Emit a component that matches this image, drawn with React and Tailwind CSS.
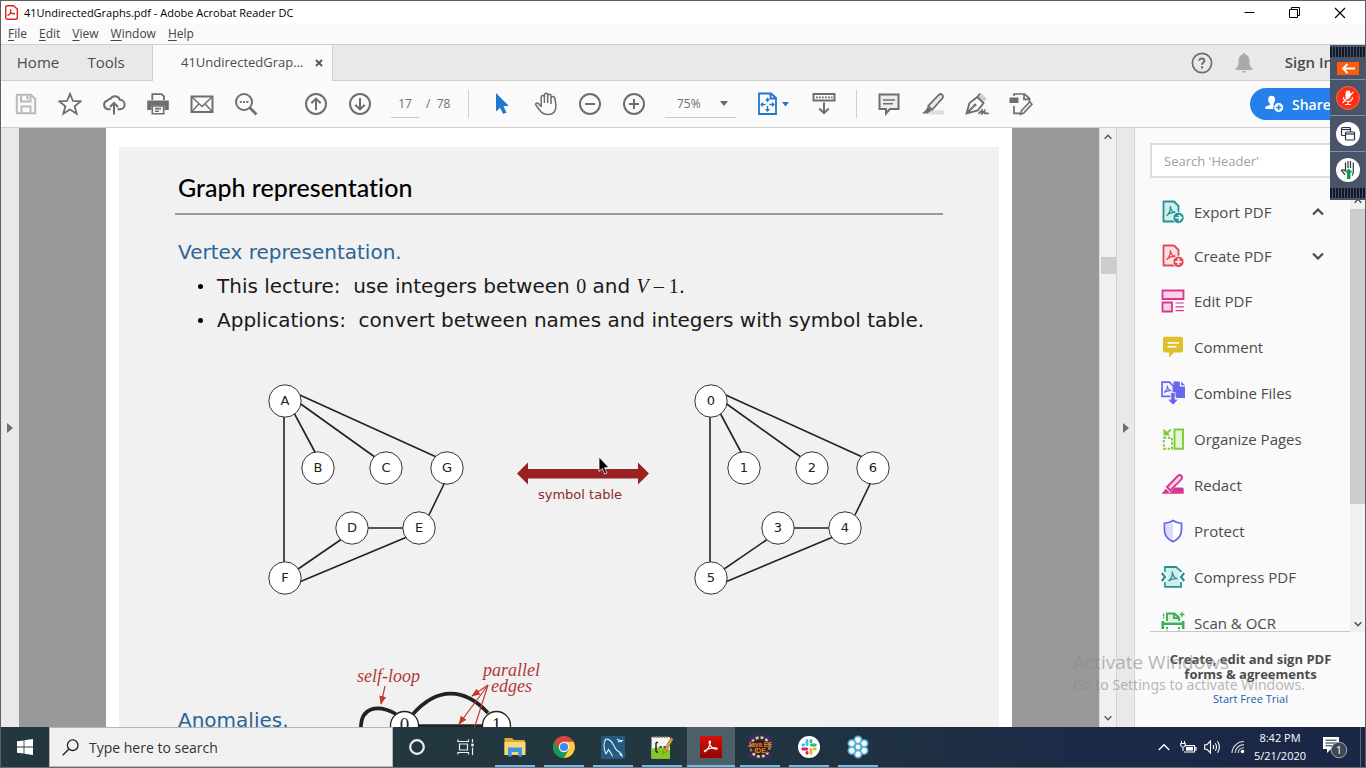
import React from "react";

const SANS = "font-['Open_Sans','Noto_Sans',sans-serif]";
const SLIDE = "font-['DejaVu_Sans',sans-serif]";

function Icon({ size = 24, children, className = "" }) {
  return (
    <svg width={size} height={size} viewBox="0 0 24 24" fill="none" stroke="currentColor" strokeWidth="2" className={`shrink-0 ${className}`} aria-hidden="true">
      {children}
    </svg>
  );
}

function ToolButton({ label, children, className = "" }) {
  return (
    <button type="button" aria-label={label} className={`flex h-11 w-11 shrink-0 items-center justify-center text-[#6e6e6e] ${className}`}>
      {children}
    </button>
  );
}

function Chevron({ up = false, className = "" }) {
  return (
    <svg width="12" height="8" viewBox="0 0 12 8" fill="none" stroke="currentColor" strokeWidth="2.2" className={className} aria-hidden="true">
      <path d={up ? "M1 6.5 L6 1.5 L11 6.5" : "M1 1.5 L6 6.5 L11 1.5"} />
    </svg>
  );
}

const ACROBAT_PATH = "M5.5 17 C8 15.5 11 10.5 11.3 6.5 C11.3 5 9.8 5 10 7 C10.3 10.5 13.5 14 17.5 14.3 C19.3 14.3 19 12.8 17 12.8 C13 12.6 8.5 14 5.8 15.6 C4.3 16.6 4.6 17.6 5.5 17 Z";

function TitleBar() {
  return (
    <header className="flex h-[23px] shrink-0 items-center bg-white pl-1">
      <svg width="13" height="15" viewBox="0 0 13 15" className="mr-[6px]" aria-hidden="true">
        <path d="M2.5 .7 H8.5 L12.3 4 V12.5 Q12.3 14.3 10.5 14.3 H2.5 Q.7 14.3 .7 12.5 V2.5 Q.7 .7 2.5 .7 Z" fill="#fff" stroke="#e0201b" strokeWidth="1.4" />
        <g transform="translate(0.6 2.2) scale(0.48)"><path d={ACROBAT_PATH} fill="none" stroke="#e0201b" strokeWidth="2.2" /></g>
      </svg>
      <h1 className="text-[11px] leading-4 text-black">41UndirectedGraphs.pdf - Adobe Acrobat Reader DC</h1>
      <div className="ml-auto flex pr-[2px] text-black">
        <button type="button" aria-label="Minimize" className="flex h-[22px] w-[45px] items-center justify-center">
          <svg width="11" height="11" viewBox="0 0 11 11"><path d="M.5 5.5 H10.5" stroke="currentColor" /></svg>
        </button>
        <button type="button" aria-label="Restore" className="flex h-[22px] w-[45px] items-center justify-center">
          <svg width="11" height="11" viewBox="0 0 11 11" fill="none" stroke="currentColor"><path d="M.5 2.5 H8.5 V10.5 H.5 Z M2.5 2 V.5 H10.5 V8.5 H9" /></svg>
        </button>
        <button type="button" aria-label="Close" className="flex h-[22px] w-[46px] items-center justify-center">
          <svg width="12" height="12" viewBox="0 0 12 12"><path d="M1 1 L11 11 M11 1 L1 11" stroke="currentColor" strokeWidth="1.1" /></svg>
        </button>
      </div>
    </header>
  );
}

function MenuBar() {
  return (
    <nav className="flex h-5 shrink-0 gap-3 bg-[#fafafa] pl-[7px] text-[12px] leading-5 text-[#444]">
      {["File", "Edit", "View", "Window", "Help"].map((m) => (
        <button type="button" key={m}>
          <span className="underline underline-offset-2">{m[0]}</span>{m.slice(1)}
        </button>
      ))}
    </nav>
  );
}

function TabBar() {
  return (
    <div className="flex h-[37px] shrink-0 items-stretch border-y border-[#cfcfcf] bg-[#e9e9e9] text-[15px] text-[#4b4b4b]">
      <button type="button" className="w-[74px]">Home</button>
      <button type="button" className="w-[62px]">Tools</button>
      <div className="-mb-px ml-[15px] flex w-[181px] items-center border-x border-[#d0d0d0] bg-[#fafafa] pl-7">
        <span className="text-[13px]">41UndirectedGrap...</span>
        <button type="button" aria-label="Close tab" className="ml-3">
          <svg width="8" height="8" viewBox="0 0 8 8"><path d="M1 1 L7 7 M7 1 L1 7" stroke="#555" strokeWidth="1.8" /></svg>
        </button>
      </div>
      <div className="ml-auto flex items-center pr-8">
        <button type="button" aria-label="Help" className="flex w-[42px] justify-center text-[#6e6e6e]">
          <svg width="22" height="22" viewBox="0 0 22 22" fill="none" stroke="currentColor">
            <circle cx="11" cy="11" r="9.6" strokeWidth="1.7" />
            <path d="M8.3 8.8 C8.3 5.6 13.6 5.8 13.4 8.7 C13.3 10.4 11 10.6 11 12.7" strokeWidth="2" />
            <path d="M11 14.3 V16.5" strokeWidth="2.2" />
          </svg>
        </button>
        <button type="button" aria-label="Notifications" className="flex w-[42px] justify-center">
          <svg width="18" height="20" viewBox="0 0 18 20" fill="#a9a9a9"><path d="M9 0 Q10.3 0 10.3 1.6 Q14.4 2.8 14.4 7.5 C14.4 12.5 15.2 14 17.3 15.2 V17 H.7 V15.2 C2.8 14 3.6 12.5 3.6 7.5 Q3.6 2.8 7.7 1.6 Q7.7 0 9 0 Z M7 18 H11 Q10.8 19.8 9 19.8 Q7.2 19.8 7 18 Z" /></svg>
        </button>
        <button type="button" className="ml-5 font-semibold">Sign In</button>
      </div>
    </div>
  );
}

function Toolbar() {
  return (
    <div className="flex h-[47px] shrink-0 items-center border-b border-[#cfcfcf] bg-[#fafafa] pl-[3px] text-[12px] text-[#6e6e6e]">
      <ToolButton label="Save">
        <Icon className="text-[#b9b9b9]"><path d="M2.8 2.8 H17 L21.2 7 V21.2 H2.8 Z" /><path d="M7 3 V9.5 H16.5 V3 M7.5 21 V14.5 H16.5 V21 M13.5 4 V7.5" /></Icon>
      </ToolButton>
      <ToolButton label="Bookmark">
        <Icon><path d="M12 1.8 L14.9 9 L22.6 9.4 L16.6 14.3 L18.7 21.8 L12 17.5 L5.3 21.8 L7.4 14.3 L1.4 9.4 L9.1 9 Z" strokeWidth="1.8" /></Icon>
      </ToolButton>
      <ToolButton label="Upload to cloud">
        <Icon><path d="M8.5 17.2 H6 A4.3 4.3 0 0 1 5.2 8.8 A4 4 0 0 1 8.6 6.8 A5 5 0 0 1 17.8 7.8 A4.7 4.7 0 0 1 18 17.2 H15.5 M12 22.5 V11.5 M8 15 L12 11 L16 15" /></Icon>
      </ToolButton>
      <ToolButton label="Print">
        <Icon><path d="M6.3 8 V2.2 H15.5 L18 4.5 V8" strokeWidth="1.8" /><path d="M1.2 8.5 H22.8 V18 H18.5 V13.5 H5.5 V18 H1.2 Z" fill="currentColor" stroke="none" /><path d="M6.3 14 H17.7 V21.8 H6.3 Z M9 16.6 H15 M9 19.2 H13" strokeWidth="1.6" /></Icon>
      </ToolButton>
      <ToolButton label="E-mail">
        <Icon><path d="M1.5 4.5 H22.5 V20 H1.5 Z" /><path d="M2 5 L12 14.5 L22 5 M2 19.5 L9 11.8 M22 19.5 L15 11.8" strokeWidth="1.4" /></Icon>
      </ToolButton>
      <ToolButton label="Find">
        <Icon><circle cx="10" cy="10" r="8" /><path d="M15.8 15.8 L22.5 22.5" strokeWidth="2.8" /><path d="M5.8 10 H14.5" strokeDasharray="2 1.3" /></Icon>
      </ToolButton>
      <ToolButton label="Previous page" className="ml-[26px]">
        <Icon><circle cx="12" cy="12" r="10" /><path d="M12 18 V7 M7.3 11.3 L12 6.6 L16.7 11.3" /></Icon>
      </ToolButton>
      <ToolButton label="Next page">
        <Icon><circle cx="12" cy="12" r="10" /><path d="M12 6 V17 M7.3 12.7 L12 17.4 L16.7 12.7" /></Icon>
      </ToolButton>
      <input aria-label="Page number" defaultValue="17" className="ml-[9px] h-[27px] w-7 shrink-0 border-b border-[#c8c8c8] bg-transparent text-center outline-none" />
      <span className="ml-[7px] w-[42px] shrink-0 whitespace-pre">/  78</span>
      <div className="h-7 w-px shrink-0 bg-[#d0d0d0]" />
      <ToolButton label="Select" className="ml-[11px]">
        <Icon><path d="M6 1 V19.5 L10 15.8 L13.2 22 L16.5 20.4 L13.4 14.3 L18.7 13.8 Z" fill="#2176cf" stroke="none" /></Icon>
      </ToolButton>
      <ToolButton label="Pan">
        <Icon><path d="M7.2 15 V5.2 a1.6 1.6 0 0 1 3.2 0 V11 V3 a1.6 1.6 0 0 1 3.3 0 V11 V3.8 a1.6 1.6 0 0 1 3.3 0 V12 V6.5 a1.6 1.6 0 0 1 3.8 0 L22 13 C22 19.5 19.5 22.6 14 22.6 C9 22.6 7 20.5 4.8 17 L1.8 12.8 C1 11.3 3.2 10.2 4.8 11.8 L7.2 14.8" strokeWidth="1.5" /></Icon>
      </ToolButton>
      <ToolButton label="Zoom out">
        <Icon><circle cx="12" cy="12" r="10" /><path d="M7 12 H17" /></Icon>
      </ToolButton>
      <ToolButton label="Zoom in">
        <Icon><circle cx="12" cy="12" r="10" /><path d="M7 12 H17 M12 7 V17" /></Icon>
      </ToolButton>
      <div className="ml-[9px] flex h-[27px] w-[71px] shrink-0 items-center border-b border-[#c8c8c8]">
        <select aria-label="Zoom level" defaultValue="75%" className="w-full appearance-none bg-transparent pl-3 outline-none">
          <option>75%</option>
        </select>
        <svg width="8" height="5" viewBox="0 0 8 5" className="mr-2 shrink-0" aria-hidden="true"><path d="M0 0 H8 L4 5 Z" fill="#666" /></svg>
      </div>
      <button type="button" aria-label="Fit page" className="ml-[21px] flex shrink-0 items-center gap-1">
        <svg width="21" height="24" viewBox="0 0 21 24" fill="none" stroke="#2176cf" strokeWidth="1.8">
          <path d="M2 1.5 H14 L19 6 V22 H2 Z M13.5 2 V6.5 H18.5" />
          <path d="M10.5 7 V10 M10.5 14 V19 M4.5 12.5 H8.5 M12.5 12.5 H16.5" strokeWidth="1.4" />
          <path d="M10.5 5.5 L13 8.5 H8 Z M10.5 20 L13 17 H8 Z M3.2 12.5 L6 10 V15 Z M17.8 12.5 L15 10 V15 Z" fill="#2176cf" stroke="none" />
        </svg>
        <svg width="7" height="5" viewBox="0 0 7 5"><path d="M0 0 H7 L3.5 4.5 Z" fill="#2176cf" /></svg>
      </button>
      <ToolButton label="Scroll mode" className="ml-[13px]">
        <Icon><path d="M1.5 2 H22.5 V8.5 H1.5 Z" /><path d="M4 5.3 H20.5" strokeDasharray="1.8 1.2" strokeWidth="1.8" /><path d="M12 10.5 V21 M7.3 16.5 L12 21.2 L16.7 16.5" /></Icon>
      </ToolButton>
      <div className="ml-[10px] h-7 w-px shrink-0 bg-[#d0d0d0]" />
      <ToolButton label="Add comment" className="ml-[10px]">
        <Icon><path d="M2.5 2.5 H21.5 V17 H13 L9 21.5 V17 H2.5 Z" fill="#ededed" /><path d="M6 8 H18 M6 11.8 H16" strokeWidth="1.4" /></Icon>
      </ToolButton>
      <ToolButton label="Highlight">
        <Icon><path d="M9 18.5 H23 V22.5 H5 Z" fill="#dcdcdc" stroke="none" /><path d="M7.2 13.8 L17.8 2.8 Q19.5 1.2 21.3 2.8 Q22.8 4.6 21.3 6.4 L11.2 17.8 Z" fill="#e8e8e8" strokeWidth="1.7" /><path d="M6.8 14.5 L10.8 18.3 L6.5 21.5 H1 L4.8 18 Z" fill="currentColor" stroke="none" /></Icon>
      </ToolButton>
      <ToolButton label="Sign">
        <Icon><path d="M12.5 5 L16 1 L21.8 6.5 L18.3 10.5 Z" fill="#cfcfcf" stroke="none" /><path d="M1.5 21.5 L4.5 11 L12.3 5 L18.5 11 L12.8 18.5 Z M2 21 L9 14" strokeWidth="1.9" /><path d="M12.3 5 L15 1.5" strokeWidth="1.6" /><circle cx="10" cy="13" r="1.6" fill="currentColor" stroke="none" /><path d="M13.5 21.8 L17 18.3 V21.5 L19.6 18.6 V21.3 H23.8" strokeWidth="1.7" /></Icon>
      </ToolButton>
      <ToolButton label="More tools">
        <Icon><path d="M5 4 V2 H15.5 L20.5 6.5 V10 M5 14 V21.3 H11 M15 2.5 V7.3 H20" strokeWidth="1.7" /><path d="M0.5 5.5 H9.5 V11 H0.5 Z" fill="currentColor" stroke="none" /><path d="M12.5 18.5 L20.8 9.8 L23 12.2 L14.8 21 L11.5 22.2 Z" fill="#e8e8e8" strokeWidth="1.5" /></Icon>
      </ToolButton>
      <button type="button" className="ml-auto mr-[11px] flex h-8 w-[104px] shrink-0 items-center gap-[8px] rounded-full bg-[#2680eb] pl-[15px] text-[14px] font-semibold text-white">
        <svg width="19" height="18" viewBox="0 0 19 18" aria-hidden="true">
          <path d="M6.5 .8 Q10 .8 10 4.5 Q10 7 8.5 8.8 V10 L11 11.2 L9.5 14 H.3 V12.5 Q.3 11 5 10 V8.8 Q3.2 7.5 3.2 4.5 Q3.2 .8 6.5 .8 Z" fill="#fff" />
          <circle cx="13.7" cy="12.5" r="5" fill="#fff" stroke="#2680eb" />
          <path d="M11 12.5 H16.4 M13.7 9.8 V15.2" stroke="#2680eb" strokeWidth="1.5" />
        </svg>
        Share
      </button>
    </div>
  );
}

const NODES = [[18, 18], [51, 85], [119, 85], [180, 85], [85, 145], [152, 145], [18, 195]];
const EDGES = [[17, 18, 17, 195], [26, 28, 49, 71], [24, 14, 119, 82], [24, 8, 176, 77], [178, 99, 162, 132], [85, 145, 152, 145], [18, 195, 85, 149], [18, 205, 152, 149]];

function Graph({ labels }) {
  return (
    <svg width="200" height="214" viewBox="0 0 200 214" className={`shrink-0 ${SLIDE}`}>
      {EDGES.map(([a, b, c, d], i) => <line key={i} x1={a} y1={b} x2={c} y2={d} stroke="#222" strokeWidth="1.6" />)}
      {NODES.map(([x, y], i) => (
        <g key={labels[i]}>
          <circle cx={x} cy={y} r="16.2" fill="#fff" stroke="#333" strokeWidth="1" />
          <text x={x} y={y + 4} textAnchor="middle" fontSize="13" fill="#222">{labels[i]}</text>
        </g>
      ))}
    </svg>
  );
}

function Anomaly() {
  return (
    <svg width="200" height="84" viewBox="350 656 200 84" className="shrink-0" fontFamily="'Liberation Serif', serif">
      <defs>
        <marker id="tip" viewBox="0 0 10 8" refX="9" refY="4" markerWidth="9" markerHeight="7" markerUnits="userSpaceOnUse" orient="auto"><path d="M0 0 L10 4 L0 8 Z" fill="#c0392b" /></marker>
      </defs>
      <g fill="none" stroke="#222" strokeWidth="3.6">
        <path d="M361 732 C359 706 378 704 396 714" />
        <path d="M413 714 C437 687 464 687 488 713" />
        <path d="M418 726 H483" />
      </g>
      <circle cx="404.5" cy="725.5" r="14" fill="#fff" stroke="#222" strokeWidth="1.3" />
      <circle cx="496.5" cy="725.5" r="14" fill="#fff" stroke="#222" strokeWidth="1.3" />
      <text x="404.5" y="731" fontSize="19" textAnchor="middle" fill="#222">0</text>
      <text x="496.5" y="731" fontSize="19" textAnchor="middle" fill="#222">1</text>
      <g stroke="#c0392b" strokeWidth="1.2">
        <line x1="385" y1="686" x2="381" y2="704" markerEnd="url(#tip)" />
        <line x1="488" y1="685" x2="472" y2="696" markerEnd="url(#tip)" />
        <line x1="488" y1="685" x2="459" y2="724" markerEnd="url(#tip)" />
        <line x1="488" y1="685" x2="473" y2="732" />
      </g>
      <g fontStyle="italic" fontSize="18" fill="#b03a35">
        <text x="357" y="682">self-loop</text>
        <text x="483" y="676">parallel</text>
        <text x="491" y="692">edges</text>
      </g>
    </svg>
  );
}

function Document() {
  return (
    <main className="flex min-w-0 flex-1 justify-center overflow-hidden bg-[#999]">
      <div className="h-max w-[906px] shrink-0 bg-white px-[13px] pt-[19px]">
        <article className={`bg-[#f1f1f1] px-[56px] pt-6 text-[20px] leading-[34px] text-[#1a1a1a] ${SLIDE}`}>
          <h2 className="pl-[3px] font-['Lato',sans-serif] text-[25px] font-medium leading-8 text-black [font-variant-ligatures:none]">Graph representation</h2>
          <hr className="mt-[10px] border-t-2 border-[#9b9b9b]" />
          <h3 className="mt-5 pl-[3px] text-[#2a6496]">Vertex representation.</h3>
          <ul className="whitespace-pre pl-[23px]">
            <li className="flex items-center gap-[14px]">
              <span className="h-[5px] w-[5px] rounded-full bg-black" />
              <span>This lecture:  use integers between <span className="font-['Liberation_Serif',serif]">0</span> and <span className="font-['Liberation_Serif',serif]"><i>V</i> – 1</span>.</span>
            </li>
            <li className="flex items-center gap-[14px]">
              <span className="h-[5px] w-[5px] rounded-full bg-black" />
              <span>Applications:  convert between names and integers with symbol table.</span>
            </li>
          </ul>
          <div className="mt-[46px] flex gap-11 pl-[92px]">
            <Graph labels={["A", "B", "C", "G", "D", "E", "F"]} />
            <figure className="w-[138px] shrink-0 pt-[79px]">
              <svg width="138" height="23" viewBox="0 0 138 23"><path d="M6 11.5 L17 .5 V7 H127 V.5 L138 11.5 L127 22.5 V16.5 H17 V22.5 Z" fill="#992222" /></svg>
              <figcaption className="text-center text-[13px] leading-5 text-[#8e2a2a]">symbol table</figcaption>
            </figure>
            <Graph labels={["0", "1", "2", "6", "3", "4", "5"]} />
          </div>
          <div className="mt-[59px] flex pl-[3px]">
            <h3 className="mt-[47px] w-[172px] text-[#2a6496]">Anomalies.</h3>
            <Anomaly />
          </div>
        </article>
      </div>
    </main>
  );
}

function PaneHandle({ label, className = "" }) {
  return (
    <button type="button" aria-label={label} className={`flex shrink-0 items-center justify-center bg-[#e9e9e9] ${className}`}>
      <svg width="6" height="10" viewBox="0 0 6 10"><path d="M0 0 L6 5 L0 10 Z" fill="#6e6e6e" /></svg>
    </button>
  );
}

const PdfSheet = ({ color, tint }) => (
  <>
    <path d="M2.5 1.5 H13 L17.5 6 V21.5 H2.5 Z" fill={tint} stroke={color} strokeWidth="1.8" strokeLinejoin="round" />
    <path d="M5.5 15.5 C8 14 9.6 10 9.3 6 C9.6 9.5 11 12 14.5 12.5 C11.5 12 8 13 5.5 15.5" stroke={color} strokeWidth="1.3" />
  </>
);

const TOOLS = [
  { name: "Export PDF", open: true, icon: <Icon><PdfSheet color="#1f9494" tint="#d3ecec" /><circle cx="17.5" cy="17.8" r="5.6" fill="#1f9494" stroke="#fff" strokeWidth="0.8" /><path d="M14.3 17.8 H20 M17.7 15 L20.4 17.8 L17.7 20.6" stroke="#fff" strokeWidth="1.6" /></Icon> },
  { name: "Create PDF", open: false, icon: <Icon><PdfSheet color="#e34850" tint="#fbe0e1" /><circle cx="17.5" cy="17.8" r="5.6" fill="#e34850" stroke="#fff" strokeWidth="0.8" /><path d="M14.3 17.8 H20.7 M17.5 14.6 V21" stroke="#fff" strokeWidth="1.8" /></Icon> },
  { name: "Edit PDF", icon: <Icon><g stroke="#d83790" fill="#f7d3e6" strokeWidth="1.8"><path d="M1.5 1.5 H22.5 V10 H1.5 Z M1.5 13.5 H11 V22.5 H1.5 Z" /><path d="M14.5 14 H22.8 M14.5 17.8 H22.8 M14.5 21.6 H22.8" strokeWidth="1.2" /></g></Icon> },
  { name: "Comment", icon: <Icon><path d="M4 1.8 H20 Q22 1.8 22 3.8 V15.5 Q22 17.5 20 17.5 H13 L8 22.5 V17.5 H4 Q2 17.5 2 15.5 V3.8 Q2 1.8 4 1.8 Z" fill="#dfbf2c" stroke="none" /><path d="M6.5 8 H18 M6.5 11.8 H15.5" stroke="#fff" strokeWidth="1.4" /></Icon> },
  { name: "Combine Files", icon: <Icon><path d="M12.5 .5 H18.8 V5.5 H24 V17 H15.5 L12.5 13 Z M20 .5 L24 4.3 H20 Z" fill="#6767ec" stroke="none" /><path d="M1 1.2 H8.5 L12.5 5.2 V15.3 H1 Z" fill="#f3f3ff" stroke="#6767ec" strokeWidth="1.7" /><path d="M3 11.5 C5.5 10 6.5 7.5 6.3 4.5 C6.7 7.8 8 9.5 10.5 9.7 C8 9.5 5 10 3 11.5" stroke="#6767ec" strokeWidth="1.1" /><path d="M9.8 11.5 H14.2 V18.3 H17.5 L12 24 L6.5 18.3 H9.8 Z" fill="#6767ec" stroke="#fff" strokeWidth="0.7" /></Icon> },
  { name: "Organize Pages", icon: <Icon><g stroke="#7ecb3a" strokeWidth="1.9"><path d="M13.5 2.5 H22 V21.8 H13.5 Z" fill="#e4f5d5" /><path d="M2.8 10.8 H11 V21.8 H2.8 Z" strokeDasharray="2.6 1.6" /><path d="M10 2.5 L4.5 7.5" /></g><path d="M2.5 1.5 V8.5 H9.5 Z" fill="#7ecb3a" stroke="none" /></Icon> },
  { name: "Redact", icon: <Icon><path d="M9 19.5 L13.5 14.5 H21 Q22.7 14.5 22.7 16 V20.8 H6 Z M4.5 15.8 L8.5 19 L6 20.8 H.8 Q.5 19.5 2.5 18.7 Z" fill="#d83790" stroke="none" /><path d="M6 14 L17 2.8 Q19 1.3 20.5 3 Q21.8 5 20.3 6.4 L9.3 17.3 Z" fill="#f7d3e6" stroke="#d83790" strokeWidth="1.9" /></Icon> },
  { name: "Protect", icon: <Icon><path d="M12 1.5 Q16 4.3 20.5 4.3 V11 C20.5 17 17 20.5 12 22.6 C7 20.5 3.5 17 3.5 11 V4.3 Q8 4.3 12 1.5 Z" fill="#fff" stroke="#6767ec" strokeWidth="1.8" /><path d="M12 3 V21 C7.5 19 5 16 5 11 V5.5 Q8.5 5.3 12 3 Z" fill="#dcdcfb" stroke="none" /></Icon> },
  { name: "Compress PDF", icon: <Icon><g stroke="#1f9494" strokeWidth="1.8"><path d="M4 7 V2 H15 L20 6.5 V7 M20 17 V21.8 H4 V17" /><path d="M4.8 3 H14.8 L19 6.8 V8 L17 12 L19 16 V21 H4.8 V16 L7 12 L4.8 8 Z" fill="#d3ecec" stroke="none" /><path d="M7.5 16 C10.5 14 11.7 11 11.3 6.5 C11.7 11 13.5 13.3 16.5 13.7 C13 13.2 10 14.3 7.5 16" strokeWidth="1.3" /><path d="M0.8 8 L4 12 L.8 16 M23.2 8 L20 12 L23.2 16" strokeWidth="2.2" /></g></Icon> },
  { name: "Scan & OCR", icon: <Icon><g stroke="#3dae58" strokeWidth="1.9"><path d="M6 10 V2.5 H13.5 L18 6.5 V10" fill="#d9f1df" /><path d="M13 3 V7 H17.5" /><path d="M1.8 10 V18 M22.2 10 V18 M1 12.8 H23" strokeWidth="2.6" /><path d="M6 16 V24 M18 16 V24 M6 22.5 H18" strokeDasharray="2 1.5" /><path d="M21 1 V6 M18.8 3.5 H23.5 M2.5 2.5 V5 M2 6.5 H3.5" strokeWidth="1.3" /></g></Icon> },
];

function Sidebar() {
  return (
    <aside className="flex w-[230px] shrink-0 flex-col bg-[#fafafa] pl-[15px] text-[#4b4b4b]">
      <input aria-label="Search tools" placeholder="Search 'Header'" className="mr-[14px] mt-[15px] h-[35px] shrink-0 border-2 border-[#dcdcdc] bg-white pl-3 text-[13px] outline-none placeholder:text-[#a0a0a0]" />
      <div className="mt-3 flex min-h-0 flex-1">
        <ul className="flex-1 overflow-hidden border-b border-[#c8c8c8] text-[15px]">
          {TOOLS.map((t) => (
            <li key={t.name} className={t.open === undefined ? "h-[46px]" : "h-[44px]"}>
              <button type="button" className="flex h-full w-full items-center gap-[9px] pl-[11px] pr-[26px] text-left">
                {t.icon}
                <span>{t.name}</span>
                {t.open !== undefined && <Chevron up={t.open} className="ml-auto" />}
              </button>
            </li>
          ))}
        </ul>
        <div className="flex w-[15px] shrink-0 flex-col items-center bg-[#f0f0f0] pb-[5px] pt-2">
          <Chevron up className="h-[6px] w-2" />
          <div className="mt-[5px] h-[295px] w-full bg-[#cdcdcd]" />
          <Chevron className="mt-auto h-[6px] w-2" />
        </div>
      </div>
      <section className="h-[95px] shrink-0 pr-[14px] pt-5 text-center">
        <p className="whitespace-nowrap text-[13px] font-bold leading-[15px]">Create, edit and sign PDF<br />forms &amp; agreements</p>
        <a href="#trial" className="mt-2 block text-[11px] leading-[18px] text-[#1a5fae]">Start Free Trial</a>
      </section>
    </aside>
  );
}

function MeetingPanel() {
  const grip = "h-[10px] w-full bg-[repeating-linear-gradient(90deg,#111827_0_2px,#4a5468_2px_3px)]";
  const cell = "flex h-9 w-full items-center justify-center border-[#8390a8]";
  return (
    <div className="absolute right-0 top-[44px] flex w-[35px] flex-col items-center bg-[#4a5468] py-[2px]">
      <div className={grip} />
      <button type="button" aria-label="Collapse panel" className="flex h-[23px] w-full items-center justify-center border-b border-[#8390a8]">
        <svg width="22" height="13" viewBox="0 0 22 13"><path d="M0 0 H22 V13 H0 Z" fill="#ff5a10" /><path d="M6 6.5 H18 M10.5 2 L6 6.5 L10.5 11" fill="none" stroke="#fff" strokeWidth="1.8" /></svg>
      </button>
      <button type="button" aria-label="Unmute" className={`${cell} border-b`}>
        <svg width="24" height="24" viewBox="0 0 24 24" fill="none" stroke="#fff">
          <circle cx="12" cy="12" r="11.5" fill="#ff2e12" stroke="#ff7b5e" strokeWidth="0.8" />
          <rect x="9.5" y="4.5" width="5" height="9" rx="2.5" fill="#fff" stroke="none" />
          <path d="M7.5 11 Q7.5 15.5 12 15.5 Q16.5 15.5 16.5 11 M12 15.5 V18.5 M9 18.5 H15 M6.5 17 L17.5 6" strokeWidth="1.2" />
          <path d="M7.5 18 L18 7.5" stroke="#ff2e12" />
        </svg>
      </button>
      <button type="button" aria-label="Share windows" className={`${cell} border-b`}>
        <svg width="24" height="24" viewBox="0 0 24 24"><circle cx="12" cy="12" r="12" fill="#fff" /><g fill="#fff" stroke="#2b3447" strokeWidth="1.2"><rect x="5.5" y="5.5" width="9" height="8" rx="1" /><path d="M5.5 7.5 H14.5" /><rect x="9.5" y="10" width="9" height="8" rx="1" /><path d="M9.5 12 H18.5" /></g></svg>
      </button>
      <button type="button" aria-label="Raise hand" className={cell}>
        <svg width="24" height="24" viewBox="0 0 24 24"><circle cx="12" cy="12" r="12" fill="#fff" /><path d="M9.5 13 V4.5 M12 10 V3 M14.5 10 V3 M17.3 12 V4.5 V13 Q17.5 16.5 16 17.5 M9.5 13 Q7 11 5.5 12.3 L9 16.8" fill="none" stroke="#2b3447" strokeWidth="1.2" /><path d="M12.7 10.5 L16.7 14.5 H14.5 V21 H11 V14.5 H8.7 Z" fill="#0ba04b" /></svg>
      </button>
      <div className={grip} />
    </div>
  );
}

const SLACK = [["#36c5f0", 0], ["#2eb67d", 90], ["#ecb22e", 180], ["#e01e5a", 270]];

const APPS = [
  { name: "Cortana", icon: <svg width="20" height="20" viewBox="0 0 20 20"><circle cx="10" cy="10" r="6.8" fill="none" stroke="#eee" strokeWidth="2.2" /></svg> },
  { name: "Task View", icon: <svg width="18" height="16" viewBox="0 0 18 16" fill="none" stroke="#eee" strokeWidth="1.2"><path d="M1 .5 V2.5 H11.5 V.5 M2.5 5 H10.5 V11 H2.5 Z M1 15.5 V13.5 H11.5 V15.5 M15.5 0 V3.5 M15.5 8.5 V16" /><rect x="14.2" y="4.7" width="2.6" height="2.6" fill="#eee" stroke="none" /></svg> },
  { name: "File Explorer", run: true, icon: <svg width="22" height="20" viewBox="0 0 22 20"><path d="M.5 1 H8 L10 3 H20 Q21 3 21 4 V18 H.5 Z" fill="#e2a52d" /><path d="M.5 5 H21.5 V18 H.5 Z" fill="#fcd779" /><path d="M4 19.5 V10.5 H18 V19.5 H14.3 V15 H7.7 V19.5 Z" fill="#3c97dc" /></svg> },
  { name: "Chrome", run: true, icon: <svg width="22" height="22" viewBox="0 0 22 22"><circle cx="11" cy="11" r="11" fill="#db4437" /><path d="M1.5 5.5 A11 11 0 0 0 11 22 L15.8 13.7 L11 11 L6.2 13.8 Z" fill="#0f9d58" /><path d="M11 22 A11 11 0 0 0 20.5 5.8 H11 L15.8 13.7 Z" fill="#ffcd40" /><circle cx="11" cy="11" r="5.2" fill="#f5f5f5" /><circle cx="11" cy="11" r="4.1" fill="#4285f4" /></svg> },
  { name: "MySQL Workbench", run: true, icon: <svg width="24" height="23" viewBox="0 0 24 23"><rect width="24" height="23" rx="2" fill="#245b82" /><path d="M5 18 C2.5 13 2 6 5 3 C12 3 12.5 11 15.5 14 C17.5 15.5 20.5 16.5 21 20 L18.5 17.8 M5 18 L7.5 13.5 C9 16.5 11 17.5 11.5 20.5 M16 3 L21 6 M17 6 L22 4" fill="none" stroke="#e7f0f6" strokeWidth="1.1" /></svg> },
  { name: "Notepad++", run: true, icon: <svg width="24" height="24" viewBox="0 0 24 24"><path d="M1.5 2 H20 V23.5 H1.5 Z" fill="#f5f5f0" /><path d="M1.5 14 Q10 10 20 15 V23.5 H1.5 Z" fill="#7fca25" /><path d="M3 2 H19" stroke="#777" strokeWidth="2" strokeDasharray="1.5 1.2" /><path d="M6 7.5 V17 M6 7.5 H8 M6 17 H8 M9.5 12 H12 M13.5 12 H16" stroke="#222" strokeWidth="1.4" /><path d="M13.5 16 L21 2.5 L23.3 4 L16 17 L13 18.5 Z" fill="#d8a13f" stroke="#835b22" strokeWidth="0.6" /></svg> },
  { name: "Adobe Acrobat Reader", run: true, active: true, icon: <svg width="22" height="22" viewBox="0 0 24 24"><defs><linearGradient id="acro" x1="0" y1="0" x2="0" y2="1"><stop offset="0" stopColor="#d90f0a" /><stop offset="1" stopColor="#8f0503" /></linearGradient></defs><rect width="24" height="24" fill="url(#acro)" /><path d={ACROBAT_PATH} fill="none" stroke="#fff" strokeWidth="1.3" /></svg> },
  { name: "Eclipse Java EE IDE", run: true, icon: <svg width="24" height="24" viewBox="0 0 24 24" fontFamily="'Liberation Sans', sans-serif" fontWeight="bold"><rect width="24" height="24" fill="#3b2b55" /><circle cx="12" cy="12" r="9.5" fill="#3a2418" stroke="#ccc" strokeWidth="2.6" strokeDasharray="3 2" /><rect y="6" width="24" height="12" fill="#2f1d1c" opacity=".45" /><text x="12" y="11.5" textAnchor="middle" fontSize="6.5" fill="#ee7f22">Java EE</text><text x="12" y="18" textAnchor="middle" fontSize="7" fill="#ee7f22">IDE</text></svg> },
  { name: "Slack", run: true, icon: <svg width="22" height="22" viewBox="0 0 22 22"><circle cx="11" cy="11" r="11" fill="#fff" />{SLACK.map(([c, a]) => <g key={c} transform={`rotate(${a} 11 11)`} fill={c}><rect x="7.6" y="3.3" width="2.8" height="6.8" rx="1.4" /><rect x="3.3" y="7.6" width="3.8" height="2.8" rx="1.4" /></g>)}</svg> },
  { name: "GoToMeeting", run: true, icon: <svg width="24" height="24" viewBox="0 0 24 24"><g fill="#eef8fd" stroke="#55a9cf" strokeWidth="1.6">{[0, 60, 120, 180, 240, 300].map((a) => <circle key={a} cx="12" cy="4.9" r="3.6" transform={`rotate(${a} 12 12)`} />)}<circle cx="12" cy="12" r="3.2" /></g></svg> },
];

function Taskbar() {
  return (
    <footer className="flex h-[41px] shrink-0 items-stretch border-b border-[#6b6b6b] bg-[linear-gradient(90deg,#22373f_0%,#22373f_50%,#1b2a47_80%,#1a2746_100%)] text-white">
      <button type="button" aria-label="Start" className="flex w-12 shrink-0 items-center justify-center">
        <svg width="16" height="16" viewBox="0 0 16 16" fill="#fff"><path d="M0 2.3 L6.6 1.4 V7.6 H0 Z M7.4 1.3 L16 0 V7.6 H7.4 Z M0 8.4 H6.6 V14.6 L0 13.7 Z M7.4 8.4 H16 V16 L7.4 14.7 Z" /></svg>
      </button>
      <label className="flex w-[344px] shrink-0 items-center gap-[10px] border border-[#b5b5b5] bg-[#f1f1f1] pl-3 text-[#333]">
        <svg width="17" height="17" viewBox="0 0 17 17" fill="none" stroke="#222" strokeWidth="1.3"><circle cx="10.7" cy="6.2" r="5.3" /><path d="M7 10 L.7 16.3" /></svg>
        <input type="text" aria-label="Search Windows" placeholder="Type here to search" className="min-w-0 flex-1 bg-transparent text-[14px] outline-none placeholder:text-[#333]" />
      </label>
      <div className="flex gap-px">
        {APPS.map((a) => (
          <button type="button" key={a.name} aria-label={a.name} className={`relative flex w-12 items-center justify-center ${a.active ? "bg-[#4d5f67]" : ""}`}>
            {a.icon}
            {a.run && <span className={`absolute bottom-0 h-[2px] bg-[#76b9ed] ${a.active ? "inset-x-0" : "inset-x-1"}`} />}
          </button>
        ))}
      </div>
      <div className="ml-auto flex items-center">
        <svg width="12" height="8" viewBox="0 0 12 8" fill="none" stroke="#fff" strokeWidth="1.3" className="mr-[10px]"><path d="M.7 7 L6 1.7 L11.3 7" /></svg>
        <svg width="17" height="13" viewBox="0 0 17 13" fill="none" stroke="#fff" strokeWidth="1.1" className="mr-[7px]"><path d="M4.5 4.5 H14.5 V11 H4 M14.5 6.5 H16 V9 H14.5 M1.5 0 V2.5 M4.5 0 V2.5 M.8 2.5 H5.2 V5 Q5 6 3 6 Q1 6 .8 5 Z M3 6 V10" /><rect x="6" y="5.8" width="7" height="3.8" fill="#fff" stroke="none" /></svg>
        <svg width="17" height="14" viewBox="0 0 17 14" fill="none" stroke="#fff" strokeWidth="1.1" className="mr-[10px]"><path d="M.7 4.7 H3 L6.5 1 V13 L3 9.3 H.7 Z M9 5 Q10.3 7 9 9 M11.3 3.2 Q13.7 7 11.3 10.8 M13.5 1.3 Q17.3 7 13.5 12.7" /></svg>
        <svg width="14" height="14" viewBox="0 0 14 14" fill="none" stroke="#dbe0ea" strokeWidth="1.1" className="mr-[8px]"><path d="M1 13 A12 12 0 0 1 13 1.5 M4 13 A9 9 0 0 1 13 4.6 M7 13 A6 6 0 0 1 13 7.7" /><circle cx="11.5" cy="11.5" r="1.8" fill="#fff" stroke="none" /></svg>
        <p className="w-[54px] text-center text-[11px] leading-[18px]">8:42 PM<br />5/21/2020</p>
        <button type="button" aria-label="1 notification" className="ml-[15px]">
          <svg width="26" height="24" viewBox="0 0 26 24" fontFamily="'Open Sans', sans-serif">
            <path d="M1 2 H17 V14 H9 L5 18 V14 H1 Z" fill="#fff" /><path d="M3.5 5.2 H14.5 M3.5 8 H14.5 M3.5 10.8 H10" stroke="#1a2746" />
            <circle cx="17" cy="15" r="7.8" fill="#3f4754" stroke="#a2a8b2" strokeWidth="1" />
            <text x="17" y="19" fontSize="11" textAnchor="middle" fill="#fff">1</text>
          </svg>
        </button>
        <div className="ml-[12px] mr-1 h-10 w-px bg-[#5d6880]" />
      </div>
    </footer>
  );
}

export default function App() {
  return (
    <div className={`relative flex h-screen flex-col overflow-hidden border-x border-t border-[#5f5f5f] bg-white ${SANS}`}>
      <TitleBar />
      <MenuBar />
      <TabBar />
      <Toolbar />
      <div className="flex min-h-0 flex-1">
        <PaneHandle label="Open navigation pane" className="w-[18px]" />
        <Document />
        <div className="flex w-[17px] shrink-0 flex-col items-center border-l border-[#dcdcdc] bg-[#f0f0f0] py-[6px] text-[#555]">
          <Chevron up className="h-[6px] w-2" />
          <div className="mt-[117px] h-[17px] w-[15px] bg-[#cdcdcd]" />
          <Chevron className="mt-auto h-[6px] w-2" />
        </div>
        <PaneHandle label="Collapse tools pane" className="w-[19px] border-x border-[#d3d3d3]" />
        <Sidebar />
      </div>
      <Taskbar />
      <MeetingPanel />
      <div className="pointer-events-none absolute bottom-[73px] right-[56px] w-[236px] whitespace-nowrap text-[#8c8c8c] opacity-60">
        <p className="text-[19px] leading-[26px]">Activate Windows</p>
        <p className="font-['Noto_Sans',sans-serif] text-[14px] leading-5">Go to Settings to activate Windows.</p>
      </div>
      <svg width="12" height="19" viewBox="0 0 12 19" className="pointer-events-none absolute left-[597px] top-[455px]" aria-hidden="true">
        <path d="M1 1 V15.5 L4.3 12.5 L6.7 18 L9 17 L6.6 11.7 H11 Z" fill="#000" stroke="#fff" strokeWidth="0.8" />
      </svg>
    </div>
  );
}
